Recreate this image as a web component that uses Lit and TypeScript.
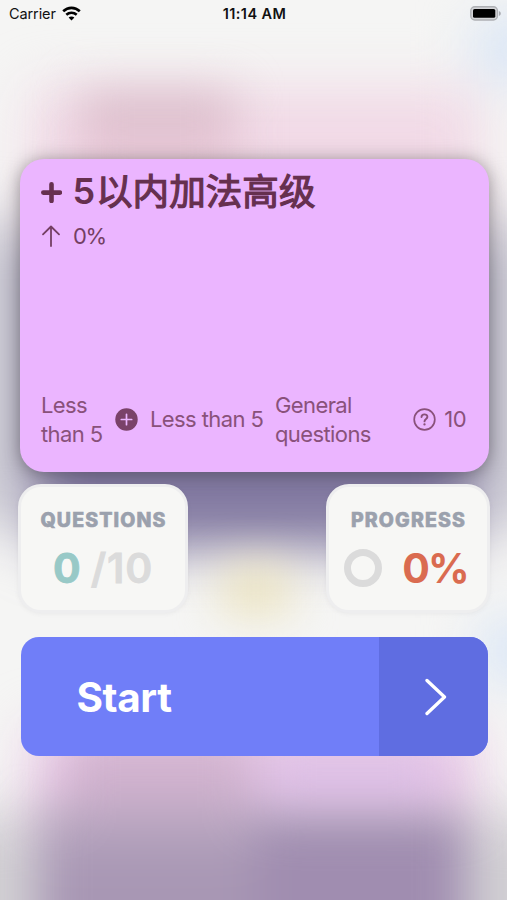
import { LitElement, html, css } from "lit";
import { customElement, property } from "lit/decorators.js";

@customElement("blurred-backdrop")
class BlurredBackdrop extends LitElement {
  static styles = css`
    :host { position: absolute; inset: 0; overflow: hidden; }
    svg { display: block; width: 100%; height: 100%; }
  `;
  render() {
    return html`<svg viewBox="0 0 507 900" preserveAspectRatio="none">
      <defs>
        <filter id="soft" filterUnits="userSpaceOnUse" x="-200" y="-100" width="907" height="1200" color-interpolation-filters="sRGB"><feGaussianBlur stdDeviation="27" /></filter>
        <filter id="mid" filterUnits="userSpaceOnUse" x="-200" y="-100" width="907" height="1200" color-interpolation-filters="sRGB"><feGaussianBlur stdDeviation="23" /></filter>
      </defs>
      <rect width="507" height="900" fill="#f5f5f4" />
      <g filter="url(#soft)">
        <rect x="-100" y="215" width="707" height="310" fill="#cfced6" />
        <rect x="-100" y="815" width="707" height="240" fill="#d2d0d4" />
        <rect x="30" y="88" width="450" height="152" fill="#f1d9e6" />
        <rect x="475" y="20" width="110" height="58" fill="#d6e4f6" />
        <rect x="480" y="624" width="110" height="54" fill="#d6e4f7" />
        <rect x="36" y="240" width="435" height="308" fill="#8178a0" />
        <rect x="30" y="728" width="447" height="92" fill="#e9c8e6" />
      </g>
      <g filter="url(#mid)">
        <rect x="80" y="92" width="155" height="38" fill="#dabfcb" />
        <rect x="80" y="130" width="155" height="40" fill="#e8c6d6" />
        <rect x="222" y="566" width="68" height="48" fill="#ebe2bc" />
        <rect x="66" y="738" width="186" height="72" fill="#d0b2ce" />
        <rect x="262" y="750" width="180" height="48" fill="#dcbfe6" />
        <rect x="38" y="808" width="229" height="52" fill="#b6a4be" />
        <rect x="38" y="850" width="229" height="240" fill="#a897b4" />
        <rect x="256" y="816" width="210" height="240" fill="#a08db0" />
      </g>
    </svg>`;
  }
}

@customElement("status-bar")
class StatusBar extends LitElement {
  static styles = css`
    :host { display: grid; grid-template-columns: 1fr auto 1fr; align-items: center; height: 27px; padding: 0 6px 0 9px; color: #111; font-size: 14.5px; line-height: 27px; }
    .left { display: flex; align-items: center; gap: 6px; }
    .carrier { letter-spacing: -0.1px; }
    .time { margin-right: 1px; font-weight: 600; letter-spacing: 0.4px; }
    .battery { justify-self: end; }
    svg { display: block; }
  `;
  render() {
    return html`
      <div class="left">
        <span class="carrier">Carrier</span>
        <svg width="19" height="15" viewBox="0 0 19 15" fill="none" stroke="#000" stroke-width="2.6">
          <path d="M1.2 5.3C6 0.7 13 0.7 17.8 5.3" />
          <path d="M4.3 8.8C7.3 6.1 11.7 6.1 14.7 8.8" />
          <path d="M9.5 14.6L6.6 11.6C8.2 10.2 10.8 10.2 12.4 11.6Z" fill="#000" stroke="none" />
        </svg>
      </div>
      <span class="time">11:14 AM</span>
      <svg class="battery" width="31" height="15" viewBox="0 0 31 15">
        <rect x="0.8" y="0.8" width="26.6" height="13.2" rx="4" fill="#d4d5d8" stroke="#aeb0b4" stroke-width="1.4" />
        <rect x="3" y="3" width="22.3" height="8.8" rx="1.6" fill="#000" />
        <path d="M28.9 5v5c1.2-.5 1.9-1.4 1.9-2.5S30.1 5.5 28.9 5z" fill="#a9abb0" />
      </svg>
    `;
  }
}

@customElement("lesson-card")
class LessonCard extends LitElement {
  static styles = css`
    :host { display: flex; flex-direction: column; box-sizing: border-box; height: 313px; padding: 10px 21px 24px; border-radius: 24px; background: #ebb5ff; color: #66304f; box-shadow: 0 2px 18px rgba(50, 45, 50, 0.5); font-size: 22px; }
    svg { display: block; flex: none; }
    .title { display: flex; height: 44px; line-height: 44px; font-size: 36px; font-weight: 600; white-space: nowrap; }
    .plus { display: grid; place-items: center start; width: 31.5px; padding-top: 2px; }
    .digit { width: 23.5px; }
    .name { font-family: "Noto Sans CJK SC", sans-serif; font-weight: 400; font-size: 36.6px; line-height: 42px; -webkit-text-stroke: 1.2px currentColor; }
    .trend { display: flex; align-items: center; gap: 13px; height: 28px; margin-top: 9px; line-height: 28px; letter-spacing: -1.3px; color: #743f63; }
    .meta { display: flex; align-items: center; margin-top: auto; line-height: 28.5px; letter-spacing: -0.6px; color: #89517a; }
    .range { width: 74px; }
    .second { width: 125px; margin-left: 12px; white-space: nowrap; }
    .kind { width: 110px; }
    .count { display: flex; align-items: center; gap: 8px; margin: 0 2px 0 auto; }
  `;
  render() {
    return html`
      <div class="title">
        <span class="plus"><svg width="21" height="21" viewBox="0 0 21 21"><path d="M10.5 2.3v16.6M2.3 10.6h16.6" fill="none" stroke="currentColor" stroke-width="4.6" stroke-linecap="round" /></svg></span>
        <span class="digit">5</span><span class="name">以内加法高级</span>
      </div>
      <div class="trend">
        <svg width="19" height="22" viewBox="0 0 19 22" fill="none" stroke="currentColor" stroke-width="1.8" stroke-linecap="round" stroke-linejoin="round"><path d="M10 21V1.5M2 9.3L10 1.5L18 9.3" /></svg>
        <span>0%</span>
      </div>
      <div class="meta">
        <span class="range">Less<br />than 5</span>
        <svg width="23" height="23" viewBox="0 0 23 23"><circle cx="11.5" cy="11.5" r="11.2" fill="#7a4269" /><path d="M11.5 6.3v10.4M6.3 11.5h10.4" stroke="#ebb5ff" stroke-width="1.7" stroke-linecap="round" /></svg>
        <span class="second">Less than 5</span>
        <span class="kind">General questions</span>
        <span class="count">
          <svg width="23" height="23" viewBox="0 0 23 23" fill="none" stroke="currentColor" stroke-width="1.7" stroke-linecap="round"><circle cx="11.5" cy="11.5" r="10.3" /><path d="M8.5 9C8.6 5.4 14.6 5.6 14.4 8.9C14.3 11 11.5 10.9 11.5 13.4" stroke-width="1.9" /><circle cx="11.5" cy="16.4" r="0.6" fill="currentColor" stroke-width="1.1" /></svg>
          <span>10</span>
        </span>
      </div>
    `;
  }
}

@customElement("stat-card")
class StatCard extends LitElement {
  @property() label = "";
  static styles = css`
    :host { display: flex; flex-direction: column; align-items: center; box-sizing: border-box; height: 129px; padding-top: 20px; border: 3px solid #eeeeef; border-radius: 23px; background: #f7f7f5; box-shadow: 0 1px 4px rgba(100, 100, 110, 0.08); }
    .label { height: 26px; line-height: 26px; font-size: 19.5px; font-weight: 800; letter-spacing: 1.15px; margin-right: -1px; color: #9ba1ad; -webkit-text-stroke: 0.6px currentColor; }
    .value { display: flex; align-items: center; height: 50px; margin-top: 10px; }
  `;
  render() {
    return html`<span class="label">${this.label}</span><div class="value"><slot></slot></div>`;
  }
}

@customElement("app-root")
class AppRoot extends LitElement {
  static styles = css`
    :host { display: block; position: relative; width: 507px; height: 900px; overflow: hidden; font-family: Inter, "Noto Sans CJK SC", sans-serif; font-feature-settings: "calt" 0; }
    .screen { position: relative; display: flex; flex-direction: column; height: 100%; }
    .card { margin: 132px 18px 0 20px; }
    .stats { display: flex; justify-content: space-between; margin: 12px 17px 0 18px; }
    .questions { width: 170px; }
    .progress { width: 164px; }
    .figure { line-height: 48px; font-size: 41px; font-weight: 700; white-space: nowrap; }
    .done { color: #98c9c7; -webkit-text-stroke: 0.8px currentColor; }
    .total { margin-left: 10px; letter-spacing: 0.8px; color: #dbdbdb; font-weight: 600; -webkit-text-stroke: 0.8px currentColor; }
    .ring { display: block; margin: 0 20px 0 -4px; }
    .percent { color: #da6b50; letter-spacing: -2px; }
    .start { display: flex; height: 119px; margin: 24px 19.5px 0 20.5px; padding: 0; border: 0; border-radius: 18px; overflow: hidden; background: #707ef8; color: #fff; font: 700 40.5px/121px Inter, sans-serif; text-align: left; }
    .start-label { flex: 1; padding-left: 56px; letter-spacing: -0.4px; }
    .start-arrow { display: grid; place-items: center; width: 108.5px; height: 119px; background: #5f6de1; }
    .start-arrow svg { display: block; margin-left: 4.5px; }
  `;
  render() {
    return html`
      <blurred-backdrop></blurred-backdrop>
      <div class="screen">
        <status-bar></status-bar>
        <lesson-card class="card"></lesson-card>
        <div class="stats">
          <stat-card class="questions" label="QUESTIONS">
            <span class="figure done">0</span><span class="figure total">/10</span>
          </stat-card>
          <stat-card class="progress" label="PROGRESS">
            <svg class="ring" width="38" height="38" viewBox="0 0 38 38"><circle cx="19" cy="19" r="15.5" fill="none" stroke="#dbdbdb" stroke-width="7" /></svg>
            <span class="figure percent">0%</span>
          </stat-card>
        </div>
        <button class="start">
          <span class="start-label">Start</span>
          <span class="start-arrow"><svg width="22" height="38" viewBox="0 0 22 38" fill="none" stroke="#fff" stroke-width="3.3" stroke-linecap="round" stroke-linejoin="round"><path d="M2 2.5L19.5 19L2 35.5" /></svg></span>
        </button>
      </div>
    `;
  }
}
